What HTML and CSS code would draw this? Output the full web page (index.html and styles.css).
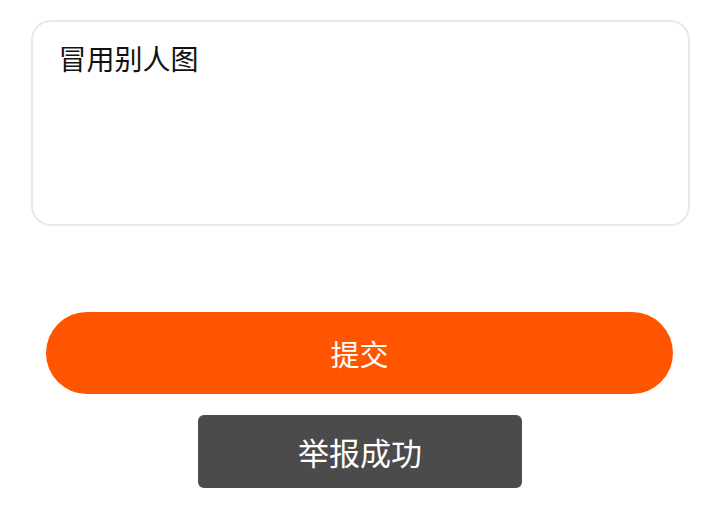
FILE: index.html
```html
<!DOCTYPE html>
<html lang="zh">
<head>
<meta charset="utf-8">
<link rel="stylesheet" href="styles.css">
</head>
<body>
<div class="page">
  <div class="reason-box">冒用别人图</div>
  <button class="submit">提交</button>
  <div class="toast">举报成功</div>
</div>
</body>
</html>
```
FILE: styles.css
```css
html, body {
  margin: 0;
  padding: 0;
  background: #ffffff;
}
body {
  font-family: "Noto Sans CJK SC", "Noto Sans", sans-serif;
}
.page {
  display: flex;
  flex-direction: column;
  align-items: center;
  padding-top: 20px;
}
.reason-box {
  box-sizing: border-box;
  width: 659px;
  height: 206px;
  margin-left: 1px;
  border: 2px solid #e9e9e9;
  border-radius: 20px;
  padding: 16px 26px;
  font-size: 28px;
  line-height: 40px;
  color: #111111;
}
.submit {
  box-sizing: border-box;
  width: 627px;
  height: 82px;
  margin-top: 86px;
  border: none;
  border-radius: 41px;
  background: #ff5500;
  color: #ffffff;
  font-family: "Noto Sans CJK SC", "Noto Sans", sans-serif;
  font-size: 29px;
  padding: 0;
}
.toast {
  box-sizing: border-box;
  width: 324px;
  height: 73px;
  margin-top: 21px;
  margin-left: 1px;
  background: #4b4b4b;
  border-radius: 6px;
  color: #ffffff;
  font-size: 31px;
  display: flex;
  align-items: center;
  justify-content: center;
}
```
